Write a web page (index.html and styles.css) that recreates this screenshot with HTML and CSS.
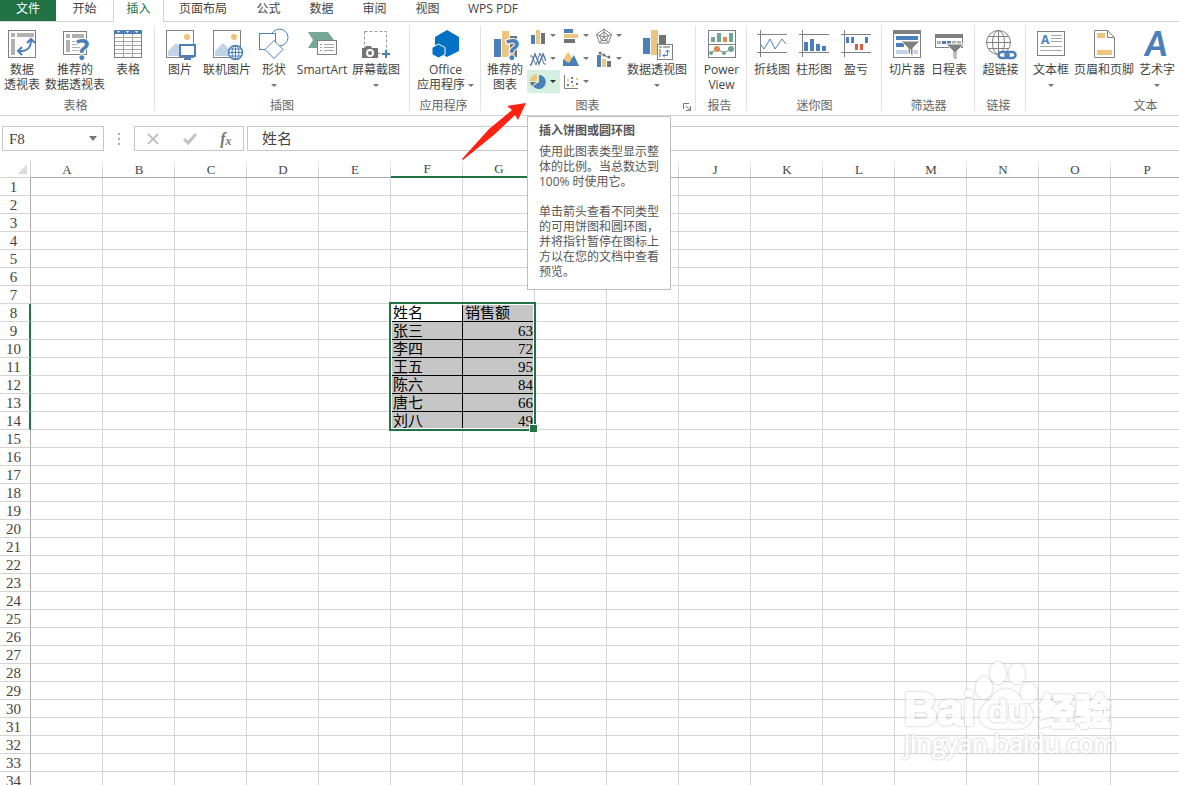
FILE: index.html
```html
<!DOCTYPE html>
<html lang="zh-CN">
<head>
<meta charset="UTF-8">
<meta name="viewport" content="width=device-width, initial-scale=1.0">
<title>Excel</title>
<link rel="stylesheet" href="styles.css">
</head>
<body>
<nav class="tabs">
  <button class="tab tab-file">文件</button>
  <button class="tab tab-home">开始</button>
  <button class="tab tab-active">插入</button>
  <button class="tab tab-wide">页面布局</button>
  <button class="tab">公式</button>
  <button class="tab">数据</button>
  <button class="tab">审阅</button>
  <button class="tab">视图</button>
  <button class="tab tab-wide">WPS PDF</button>
</nav>

<div class="ribbon">
  <section class="group group-tables">
    <div class="tools">
      <button class="tool">
        <svg class="icon" viewBox="0 0 32 32"><rect x="2.500" y="2.500" width="27" height="27" fill="#fff" stroke="#808080"/><path d="M5 5h4v4H5zM11 5h17v4H11zM5 11h4v16H5z" fill="#b1b1b1"/><path d="M12 23C21 24 25 20 25 12M21 15l4-4 4 4M16 19l-4 4 4 4" fill="none" stroke="#4a7fb9" stroke-width="2"/></svg>
        <span>数据<br>透视表</span>
      </button>
      <button class="tool tool-60">
        <svg class="icon" viewBox="0 0 32 32"><rect x="4.500" y="3.500" width="23" height="23" fill="#fff" stroke="#808080"/><path d="M7 6h4v4H7zM13 6h12v4H13zM7 12h4v12H7z" fill="#b1b1b1"/><path d="M13 13.500h6M13 16.500h6M13 19.500h8M13 22.500h8" stroke="#b1b1b1"/><text x="17" y="32" class="question">?</text></svg>
        <span>推荐的<br>数据透视表</span>
      </button>
      <button class="tool">
        <svg class="icon" viewBox="0 0 32 32"><rect x="2.500" y="2.500" width="27" height="27" fill="#fff" stroke="#808080"/><path d="M2 2h28v4H2z" fill="#4a7fb9"/><path d="M5 3h3l-1.500 2zM14 3h3l-1.500 2zM23 3h3l-1.500 2z" fill="#fff"/><path d="M3 9.500h26M3 13.500h26M3 17.500h26M3 21.500h26M3 25.500h26M11.500 6v23M20.500 6v23" stroke="#a6a6a6"/></svg>
        <span>表格</span>
      </button>
    </div>
    <div class="group-name">表格</div>
  </section>

  <section class="group group-pictures">
    <div class="tools">
      <button class="tool">
        <svg class="icon" viewBox="0 0 32 32"><rect x="2.500" y="2.500" width="27" height="27" fill="#fff" stroke="#808080"/><circle cx="23" cy="9" r="3" fill="#ecc379"/><path d="M4 28V23l8-8 9 9v4z" fill="#c0d3e9"/><rect x="16" y="17" width="15" height="11" fill="#fff" stroke="#4a7fb9" stroke-width="2"/><path d="M22 28h3v2h2v2h-7v-2h2z" fill="#4a7fb9"/></svg>
        <span>图片</span>
      </button>
      <button class="tool tool-50">
        <svg class="icon" viewBox="0 0 32 32"><rect x="2.500" y="2.500" width="27" height="27" fill="#fff" stroke="#808080"/><circle cx="23" cy="9" r="3" fill="#ecc379"/><path d="M4 28V23l8-8 9 9v4z" fill="#c0d3e9"/><circle cx="24.500" cy="24.500" r="7" fill="#fff" stroke="#4a7fb9" stroke-width="1.500"/><path d="M24.500 18v13M18 24.500h13M19 21h11M19 28h11" stroke="#4a7fb9"/><ellipse cx="24.500" cy="24.500" rx="3.500" ry="7" fill="none" stroke="#4a7fb9"/></svg>
        <span>联机图片</span>
      </button>
      <button class="tool">
        <svg class="icon" viewBox="0 0 32 32"><circle cx="21.500" cy="9.500" r="8.500" fill="#fff" stroke="#4a7fb9"/><rect x="1.500" y="5.500" width="16" height="16" fill="#fff" stroke="#4a7fb9"/><path d="M16 12.500l9 9-9 9-9-9z" fill="#fff" stroke="#4a7fb9"/></svg>
        <span>形状<br><i class="caret"></i></span>
      </button>
      <button class="tool tool-52">
        <svg class="icon" viewBox="0 0 32 32"><path d="M2 4h20l6 8h-15v8H2l5-8z" fill="#77a795"/><rect x="11.500" y="12.500" width="19" height="14" fill="#fff" stroke="#808080"/><path d="M14 16.500h2M18 16.500h10M14 19.500h2M18 19.500h10M14 22.500h2M18 22.500h10" stroke="#a6a6a6"/></svg>
        <span>SmartArt</span>
      </button>
      <button class="tool tool-56">
        <svg class="icon" viewBox="0 0 32 32"><rect x="4.500" y="3.500" width="22" height="22" fill="#fff" stroke="#999" stroke-dasharray="3 2"/><path d="M2 20h3l1-2h5l1 2h6v10H2z" fill="#737373"/><circle cx="10" cy="25" r="3" fill="none" stroke="#fff" stroke-width="2"/><path d="M26 22v8M22 26h8" stroke="#4a7fb9" stroke-width="2"/></svg>
        <span>屏幕截图<br><i class="caret"></i></span>
      </button>
    </div>
    <div class="group-name">插图</div>
  </section>

  <section class="group group-apps">
    <div class="tools">
      <button class="tool tool-fill">
        <svg class="icon" viewBox="0 0 32 32"><path d="M17 2l12 7v14l-12 6-12-7V9z" fill="#0072c6"/><path d="M8.500 16l6.500 3.500v7L8.500 30 2 26.500v-7z" fill="#0072c6" stroke="#fff"/></svg>
        <span>Office<br>应用程序 <i class="caret"></i></span>
      </button>
    </div>
    <div class="group-name">应用程序</div>
  </section>

  <section class="group group-charts">
    <div class="tools">
      <button class="tool">
        <svg class="icon" viewBox="0 0 32 32"><path d="M5 11h7v18H5z" fill="#4a7fb9"/><path d="M13 3h7v26h-7z" fill="#ecc57f"/><path d="M21 8h7v21h-7z" fill="#737373"/><text x="17" y="32" class="question">?</text></svg>
        <span>推荐的<br>图表</span>
      </button>
      <div class="chart-grid">
        <button class="mini" aria-label="柱形图"><svg class="icon-mini" viewBox="0 0 16 16"><path d="M1 7h4v9H1z" fill="#4a7fb9"/><path d="M6 2h4v14H6z" fill="#ecc57f"/><path d="M11 5h4v11h-4z" fill="#737373"/></svg><i class="caret"></i></button>
        <button class="mini" aria-label="条形图"><svg class="icon-mini" viewBox="0 0 16 16"><path d="M1 1h9v4H1z" fill="#4a7fb9"/><path d="M1 6h14v4H1z" fill="#ecc57f"/><path d="M1 11h11v4H1z" fill="#737373"/></svg><i class="caret"></i></button>
        <button class="mini" aria-label="雷达图"><svg class="icon-mini" viewBox="0 0 16 16"><path d="M8 1l7.500 5.500-3 8.500h-9l-3-8.500zM8 4l4.500 3.500-2 5h-5l-2-5zM8 1v8L.500 6.500M8 9l7.500-2.500M8 9l4.500 6M8 9l-4.500 6" fill="none" stroke="#808080"/></svg><i class="caret"></i></button>
        <button class="mini" aria-label="折线图"><svg class="icon-mini" viewBox="0 0 16 16"><path d="M0 5h2l4 9 4-12 4 11h2" fill="none" stroke="#737373"/><path d="M0 14h1L5 3l4 10 4-10 3 7" fill="none" stroke="#4a7fb9" stroke-width="1.500"/></svg><i class="caret"></i></button>
        <button class="mini" aria-label="面积图"><svg class="icon-mini" viewBox="0 0 16 16"><path d="M1 7l4-6 6 8v6H1z" fill="#ecc57f"/><path d="M0 15V8l4 3 2 1 5-8 5 11z" fill="#4a7fb9"/></svg><i class="caret"></i></button>
        <button class="mini" aria-label="组合图"><svg class="icon-mini" viewBox="0 0 16 16"><path d="M1 4h4v12H1z" fill="#4a7fb9"/><path d="M6 8h4v8H6z" fill="#ecc57f"/><path d="M11 10h4v6h-4z" fill="#737373"/><path d="M3 2l5 2 5 3" stroke="#737373" fill="none"/><circle cx="4" cy="2" r="1.500" fill="#737373"/><circle cx="8" cy="4" r="1.500" fill="#737373"/><circle cx="13" cy="6" r="1.500" fill="#737373"/></svg><i class="caret"></i></button>
        <div class="tip-anchor">
          <button class="mini mini-hover" aria-label="插入饼图或圆环图" aria-describedby="tip"><svg class="icon-mini" viewBox="0 0 16 16"><path d="M9 1a7 7 0 1 1-6 11L9 8z" fill="#4a7fb9"/><path d="M7 0v7H0a7 7 0 0 1 7-7z" fill="#ecc57f"/><path d="M0 8h6l-4 4a7 7 0 0 1-2-4z" fill="#737373"/></svg><i class="caret caret-dark"></i></button>
          <svg class="pointer" viewBox="0 0 66 58"><path d="M1 56L28 26 51 7 46 3l19-3-8 17-3-5-20 19L2 57z" fill="#ff2112"/></svg>
          <div class="tip" id="tip" role="tooltip">
            <h2>插入饼图或圆环图</h2>
            <p>使用此图表类型显示整体的比例。当总数达到 100% 时使用它。</p>
            <p>单击箭头查看不同类型的可用饼图和圆环图，并将指针暂停在图标上方以在您的文档中查看预览。</p>
          </div>
        </div>
        <button class="mini" aria-label="散点图"><svg class="icon-mini" viewBox="0 0 16 16"><path d="M1.500 1v13.500H15" fill="none" stroke="#808080"/><path d="M4 10h2v2H4zM8 3h2v2H8zM8 7h2v2H8zM13 9h2v2h-2z" fill="#4a7fb9"/><path d="M4 5h2v2H4zM9 11h2v2H9zM13 4h2v2h-2z" fill="#ecc57f"/></svg><i class="caret"></i></button>
      </div>
      <button class="tool tool-60">
        <svg class="icon" viewBox="0 0 32 32"><path d="M2 10h7v16H2z" fill="#4a7fb9"/><path d="M10 2h7v25h-7z" fill="#ecc57f"/><path d="M18 7h7v12h-7z" fill="#737373"/><rect x="16.500" y="16.500" width="15" height="15" fill="#fff" stroke="#808080"/><path d="M18 18h3v2h-3zM22 18h7v2h-7zM18 21h2v8h-2z" fill="#b1b1b1"/><path d="M22 27.500h4.500V22M24.500 24l2-2 2 2M24 25.500l-2 2 2 2" fill="none" stroke="#4a7fb9"/></svg>
        <span>数据透视图<br><i class="caret"></i></span>
      </button>
    </div>
    <div class="group-name">图表</div>
    <button class="launcher" aria-label="图表选项"><svg viewBox="0 0 8 8"><path d="M.500 6V.500H6M3 3l4 4M7.500 3v4.500H3" fill="none" stroke="#777"/></svg></button>
  </section>

  <section class="group group-single">
    <div class="tools">
      <button class="tool tool-fill">
        <svg class="icon" viewBox="0 0 32 32"><rect x="2.500" y="2.500" width="27" height="27" fill="#fff" stroke="#808080"/><path d="M2 16.500h28" stroke="#808080"/><path d="M5 9h4v5H5zM11 5h4v9h-4zM23 5h4v9h-4z" fill="#6ea795"/><path d="M17 9h4v5h-4z" fill="#e2894a"/><path d="M5 25l6-4 7 4 7-4" fill="none" stroke="#808080"/><circle cx="5" cy="25" r="2" fill="#6ea795"/><circle cx="11" cy="21" r="3" fill="#e2894a"/><circle cx="18" cy="25" r="2" fill="#6ea795"/><circle cx="25" cy="21" r="3" fill="#6ea795"/></svg>
        <span>Power<br>View</span>
      </button>
    </div>
    <div class="group-name">报告</div>
  </section>

  <section class="group group-spark">
    <div class="tools">
      <button class="tool tool-42">
        <svg class="icon" viewBox="0 0 32 32"><path d="M1 6.500h30M1 24.500h30M4.500 2v27" stroke="#808080"/><path d="M5 17l3 4 6-10 5 10 7-10 4 5" fill="none" stroke="#4a7fb9"/></svg>
        <span>折线图</span>
      </button>
      <button class="tool tool-42">
        <svg class="icon" viewBox="0 0 32 32"><path d="M1 6.500h30M1 24.500h30M4.500 2v27" stroke="#808080"/><path d="M6 14h4v9H6zM12 11h4v12h-4zM18 16h4v7h-4zM24 18h4v5h-4z" fill="#4a7fb9"/></svg>
        <span>柱形图</span>
      </button>
      <button class="tool tool-42">
        <svg class="icon" viewBox="0 0 32 32"><path d="M1 6.500h30M1 24.500h30M4.500 2v27" stroke="#808080"/><path d="M6 9h3v6H6zM11 9h3v6h-3zM25 9h3v6h-3z" fill="#4a7fb9"/><path d="M15 16h3v6h-3zM20 16h3v6h-3z" fill="#d65f3f"/></svg>
        <span>盈亏</span>
      </button>
    </div>
    <div class="group-name">迷你图</div>
  </section>

  <section class="group group-filter">
    <div class="tools">
      <button class="tool tool-42">
        <svg class="icon" viewBox="0 0 32 32"><rect x="2.500" y="2.500" width="27" height="27" fill="#fff" stroke="#808080"/><path d="M2 2h28v4H2z" fill="#808080"/><path d="M5 8h22v4H5zM5 15h8v4H5z" fill="#4a7fb9"/><path d="M5 22h22v4H5z" fill="#c0d3e9"/><path d="M10 13h19l-7 7v8l-5-3v-5z" fill="#808080" stroke="#fff"/><path d="M19.500 21v5" stroke="#fff"/></svg>
        <span>切片器</span>
      </button>
      <button class="tool tool-42">
        <svg class="icon" viewBox="0 0 32 32"><rect x="2.500" y="6.500" width="27" height="13" fill="#fff" stroke="#808080"/><path d="M2 6h28v4H2z" fill="#808080"/><path d="M4 13h4v3H4zM19 13h4v3h-4zM24 13h4v3h-4z" fill="#b1b1b1"/><path d="M9 13h4v3H9zM14 13h4v3h-4z" fill="#4a7fb9"/><path d="M13 16h18l-7 7v9l-4-2v-7z" fill="#808080" stroke="#fff"/><path d="M22 24v6" stroke="#fff"/></svg>
        <span>日程表</span>
      </button>
    </div>
    <div class="group-name">筛选器</div>
  </section>

  <section class="group group-single">
    <div class="tools">
      <button class="tool tool-fill">
        <svg class="icon" viewBox="0 0 32 32"><g fill="none" stroke="#808080"><circle cx="13.500" cy="14.500" r="12"/><ellipse cx="13.500" cy="14.500" rx="6" ry="12"/><path d="M13.500 2v25M1 14.500h25M3 8.500h21M3 20.500h21"/></g><g fill="#fff" stroke="#4a7fb9" stroke-width="2.500"><rect x="13.500" y="24" width="10" height="6" rx="3"/><rect x="20.500" y="24" width="10" height="6" rx="3" fill="none"/></g></svg>
        <span>超链接</span>
      </button>
    </div>
    <div class="group-name">链接</div>
  </section>

  <section class="group group-text">
    <div class="tools">
      <button class="tool">
        <svg class="icon" viewBox="0 0 32 32"><rect x="2.500" y="3.500" width="27" height="24" fill="#fff" stroke="#808080"/><text x="6" y="16" class="letter">A</text><path d="M16 7.500h11M16 10.500h11M16 13.500h11M5 18.500h22M5 22.500h22" stroke="#a6a6a6"/></svg>
        <span>文本框<br><i class="caret"></i></span>
      </button>
      <button class="tool tool-60">
        <svg class="icon" viewBox="0 0 32 32"><path d="M6.500 2.500h13l7 7v20h-20z" fill="#fff" stroke="#808080"/><path d="M19.500 2.500v7h7" fill="none" stroke="#808080"/><path d="M9 5h8v5H9zM9 22h15v5H9z" fill="#ecc57f"/></svg>
        <span>页眉和页脚</span>
      </button>
      <button class="tool">
        <svg class="icon" viewBox="0 0 32 32"><text x="4" y="28" class="letter-art">A</text></svg>
        <span>艺术字<br><i class="caret"></i></span>
      </button>
    </div>
    <div class="group-name">文本</div>
  </section>
</div>

<div class="formula-bar">
  <div class="name-box">
    <input type="text" value="F8" aria-label="名称框">
    <button aria-label="展开"><i class="caret caret-big"></i></button>
  </div>
  <div class="dots"><i></i><i></i><i></i></div>
  <div class="fx-box">
    <button aria-label="取消"><svg viewBox="0 0 14 14"><path d="M2 2l10 10M12 2L2 12" stroke="#c3c3c3" stroke-width="2"/></svg></button>
    <button aria-label="输入"><svg viewBox="0 0 14 14"><path d="M1 7l4 4 8-9" fill="none" stroke="#c3c3c3" stroke-width="3"/></svg></button>
    <button class="fx" aria-label="插入函数">f<sub>x</sub></button>
  </div>
  <input class="formula" type="text" value="姓名" aria-label="编辑栏">
</div>

<main class="sheet-area">
  <table class="sheet" id="sheet"></table>
</main>

<svg class="watermark" viewBox="0 0 216 108" aria-hidden="true">
  <text x="2" y="66" class="wm-logo">Bai</text>
  <g class="wm-paw">
    <path d="M104 30c10 0 13 9 20 14 6 5 8 12 5 18-4 8-14 8-25 7-11 1-21 1-25-7-3-6-1-13 5-18 7-5 10-14 20-14z"/>
    <ellipse cx="82" cy="29" rx="8" ry="11"/>
    <ellipse cx="96" cy="14" rx="8" ry="11"/>
    <ellipse cx="115" cy="15" rx="8" ry="10"/>
    <ellipse cx="127" cy="34" rx="8" ry="10"/>
  </g>
  <text x="86" y="63" class="wm-du">du</text>
  <text x="137" y="66" class="wm-cn">经验</text>
  <text x="2" y="94" class="wm-url">jingyan.baidu.com</text>
</svg>

<script src="script.js"></script>
</body>
</html>
```
FILE: styles.css
```css
* {
  box-sizing: border-box;
}
body {
  margin: 0;
  height: 100vh;
  display: flex;
  flex-direction: column;
  position: relative;
  overflow: hidden;
  background: #fff;
  color: #444;
  font: 12px/15px "Open Sans", "Noto Sans CJK SC", sans-serif;
}
button, input {
  font: inherit;
  color: inherit;
  border: 0;
  padding: 0;
  margin: 0;
  background: none;
}

/* tabs */
.tabs {
  display: flex;
  flex: none;
  height: 22px;
  border-bottom: 1px solid #d4d4d4;
}
.tab {
  flex: none;
  width: 53px;
  height: 21px;
  padding-bottom: 4px;
  white-space: nowrap;
}
.tab-file {
  width: 56px;
  background: #217346;
  color: #fff;
}
.tab-home {
  width: 57px;
}
.tab-active {
  width: 51px;
  height: 22px;
  padding-bottom: 5px;
  background: #fff;
  color: #217346;
  border: solid #d4d4d4;
  border-width: 0 1px;
}
.tab-wide {
  width: 78px;
}

/* ribbon */
.ribbon {
  display: flex;
  flex: none;
  height: 94px;
  padding-top: 2px;
  border-bottom: 1px solid #d4d4d4;
}
.group {
  position: relative;
  flex: none;
  display: flex;
  flex-direction: column;
  justify-content: space-between;
  padding-bottom: 2px;
}
.group::after {
  content: "";
  position: absolute;
  top: 2px;
  right: 0;
  bottom: 4px;
  width: 1px;
  background: #e1e1e1;
}
.group-tables { width: 155px; }
.group-pictures { width: 255px; padding-left: 3px; }
.group-apps { width: 71px; }
.group-charts { width: 215px; padding-left: 2px; }
.group-single { width: 51px; }
.group-spark { width: 135px; padding-left: 4px; }
.group-filter { width: 93px; padding-left: 4px; }
.group-text { width: 240px; padding-left: 3px; }
.group-name {
  padding-right: 4px;
  color: #666;
  text-align: center;
}
.tools {
  display: flex;
}
.tool {
  display: flex;
  flex-direction: column;
  align-items: center;
  gap: 2px;
  width: 44px;
  height: 70px;
  padding-top: 4px;
  white-space: nowrap;
}
.tool-42 { width: 42px; }
.tool-50 { width: 50px; }
.tool-52 { width: 52px; }
.tool-56 { width: 56px; }
.tool-60 { width: 62px; }
.tool-fill { width: 100%; }
.icon {
  flex: none;
  width: 32px;
  height: 32px;
  overflow: visible;
}
.question {
  font: bold 28px "Open Sans", sans-serif;
  fill: #4a7fb9;
  stroke: #fff;
  stroke-width: 2px;
  paint-order: stroke;
}
.letter {
  font: bold 12px "Open Sans", sans-serif;
  fill: #4a7fb9;
}
.letter-art {
  font: italic 900 34px Lato, sans-serif;
  fill: #4a7fb9;
}
.caret {
  display: inline-block;
  width: 0;
  vertical-align: middle;
  border: 3px solid transparent;
  border-top-color: #777;
  border-bottom: 0;
}
.caret-dark {
  border-top-color: #333;
}
.caret-big {
  border-width: 5px 4px 0;
}
.chart-grid {
  display: grid;
  grid-template-columns: repeat(3, 33px);
  grid-auto-rows: 23px;
}
.mini {
  display: flex;
  align-items: center;
  gap: 4px;
  width: 33px;
  height: 23px;
  padding-left: 3px;
}
.mini-hover {
  background: #d3f0e0;
}
.icon-mini {
  width: 16px;
  height: 16px;
}
.launcher {
  position: absolute;
  right: 5px;
  bottom: 4px;
  width: 8px;
  height: 8px;
}
.launcher svg {
  display: block;
}

/* tooltip */
.tip-anchor {
  position: relative;
}
.tip {
  position: absolute;
  z-index: 2;
  top: 46px;
  left: 0;
  width: 144px;
  padding: 6px 11px 10px;
  background: #fff;
  border: 1px solid #bebebe;
  color: #575757;
}
.tip h2 {
  margin: 0 0 6px;
  font-size: 12px;
  line-height: 15px;
}
.tip p {
  margin: 0 0 15px;
}
.tip p:last-child {
  margin: 0;
}
.pointer {
  position: absolute;
  z-index: 3;
  top: 33px;
  right: 33px;
  width: 66px;
  height: 58px;
}

/* formula bar */
.formula-bar {
  display: flex;
  flex: none;
  height: 44px;
  padding: 10px 0 9px 2px;
  font: 15px/20px "Liberation Serif", "Noto Sans CJK SC", serif;
}
.name-box {
  display: flex;
  width: 102px;
  border: 1px solid #c6c6c6;
}
.name-box input {
  width: 80px;
  padding-left: 6px;
}
.name-box button {
  width: 20px;
}
.name-box .caret {
  display: block;
  margin: 0 auto;
}
.dots {
  display: flex;
  flex-direction: column;
  align-items: center;
  justify-content: center;
  gap: 3px;
  width: 30px;
}
.dots i {
  width: 2px;
  height: 2px;
  background: #aaa;
}
.fx-box {
  display: flex;
  align-items: center;
  justify-content: space-around;
  width: 110px;
  border: 1px solid #c6c6c6;
}
.fx-box svg {
  display: block;
  width: 14px;
  height: 14px;
}
.fx {
  font: italic bold 16px/16px "Liberation Serif", serif;
  color: #777;
}
.fx sub {
  font-size: 12px;
  line-height: 0;
  vertical-align: -1px;
}
.formula {
  flex: 1;
  min-width: 0;
  margin-left: 3px;
  padding-left: 14px;
  border: 1px solid #c6c6c6;
  border-right: 0;
}

/* sheet */
.sheet-area {
  flex: 1;
  min-height: 0;
  overflow: hidden;
}
.sheet {
  table-layout: fixed;
  width: 0;
  border-spacing: 0;
  color: #000;
  font: 15px/16px "Liberation Serif", "Noto Sans CJK SC", serif;
}
.sheet th, .sheet td {
  width: 72px;
  height: 18px;
  padding: 0;
  border: solid #d4d4d4;
  border-width: 0 1px 1px 0;
  white-space: nowrap;
}
.sheet th {
  color: #444;
  font-weight: normal;
}
.sheet .col-head {
  padding-top: 2px;
  font-size: 13px;
  line-height: 15px;
  vertical-align: top;
  border-right: 0;
  border-bottom-color: #ababab;
  background: linear-gradient(#f0f0f0, #c8c8c8) right / 1px 100% no-repeat;
}
.sheet .row-head {
  width: 31px;
  padding: 2px 3px 0 0;
  line-height: 15px;
  border-right-color: #ababab;
}
.sheet .corner {
  width: 31px;
  border-right-color: #d4d4d4;
  background: linear-gradient(135deg, transparent 50%, #dcdcdc 50%) 17px 4px / 10px 10px no-repeat;
}
.sheet .col-head.picked {
  line-height: 14px;
  border-bottom: 2px solid #217346;
}
.sheet .row-head.picked {
  padding-right: 2px;
  border-right: 2px solid #217346;
}
.sheet .data {
  padding: 1px 0 0 2px;
  background: #c6c6c6;
  border-color: #000;
}
.sheet .number {
  padding-right: 1px;
  text-align: right;
}
.sheet .current {
  position: relative;
  background: #fff;
}
.selection {
  position: absolute;
  top: -2px;
  left: -2px;
  width: 147px;
  height: 129px;
  border: 2px solid #217346;
  box-shadow: inset 0 0 0 1px #fff;
  pointer-events: none;
}
.selection::after {
  content: "";
  position: absolute;
  right: -4px;
  bottom: -4px;
  width: 7px;
  height: 7px;
  background: #217346;
  border: 1px solid #fff;
}

/* watermark */
.watermark {
  position: absolute;
  right: 61px;
  bottom: 18px;
  width: 216px;
  height: 108px;
  overflow: visible;
  fill: #fff;
  stroke: #fff;
  opacity: 0.75;
  pointer-events: none;
}
.watermark text, .wm-paw {
  filter: drop-shadow(0 0 1px #a0a0a0);
}
.wm-logo {
  font: bold 46px "Liberation Sans", sans-serif;
  stroke-width: 2px;
}
.wm-du {
  font: bold 32px "Liberation Sans", sans-serif;
}
.wm-cn {
  font: 900 36px "Noto Sans CJK SC", sans-serif;
  stroke-width: 2px;
}
.wm-url {
  font: 25px "Open Sans", sans-serif;
}
```
FILE: script.js
```javascript
const COLUMNS = 'ABCDEFGHIJKLMNOP'.split('');
const ROWS = 34;
const FIRST_ROW = 8;
const data = [
  ['姓名', '销售额'],
  ['张三', 63],
  ['李四', 72],
  ['王五', 95],
  ['陈六', 84],
  ['唐七', 66],
  ['刘八', 49]
];

function isDataRow(row) {
  return row >= FIRST_ROW && row < FIRST_ROW + data.length;
}

function cell(row, col) {
  const index = COLUMNS.indexOf(col) - COLUMNS.indexOf('F');
  if (!isDataRow(row) || index < 0 || index > 1) return '<td></td>';
  const value = data[row - FIRST_ROW][index];
  const current = row === FIRST_ROW && index === 0;
  let cls = 'data';
  if (typeof value === 'number') cls += ' number';
  if (current) cls += ' current';
  return `<td class="${cls}">${value}${current ? '<div class="selection"></div>' : ''}</td>`;
}

let html = '<thead><tr><th class="corner"></th>';
for (const col of COLUMNS) {
  html += `<th scope="col" class="col-head${col === 'F' || col === 'G' ? ' picked' : ''}">${col}</th>`;
}
html += '</tr></thead><tbody>';
for (let row = 1; row <= ROWS; row++) {
  html += `<tr><th scope="row" class="row-head${isDataRow(row) ? ' picked' : ''}">${row}</th>`;
  html += COLUMNS.map(col => cell(row, col)).join('') + '</tr>';
}
document.getElementById('sheet').innerHTML = html + '</tbody>';
```
